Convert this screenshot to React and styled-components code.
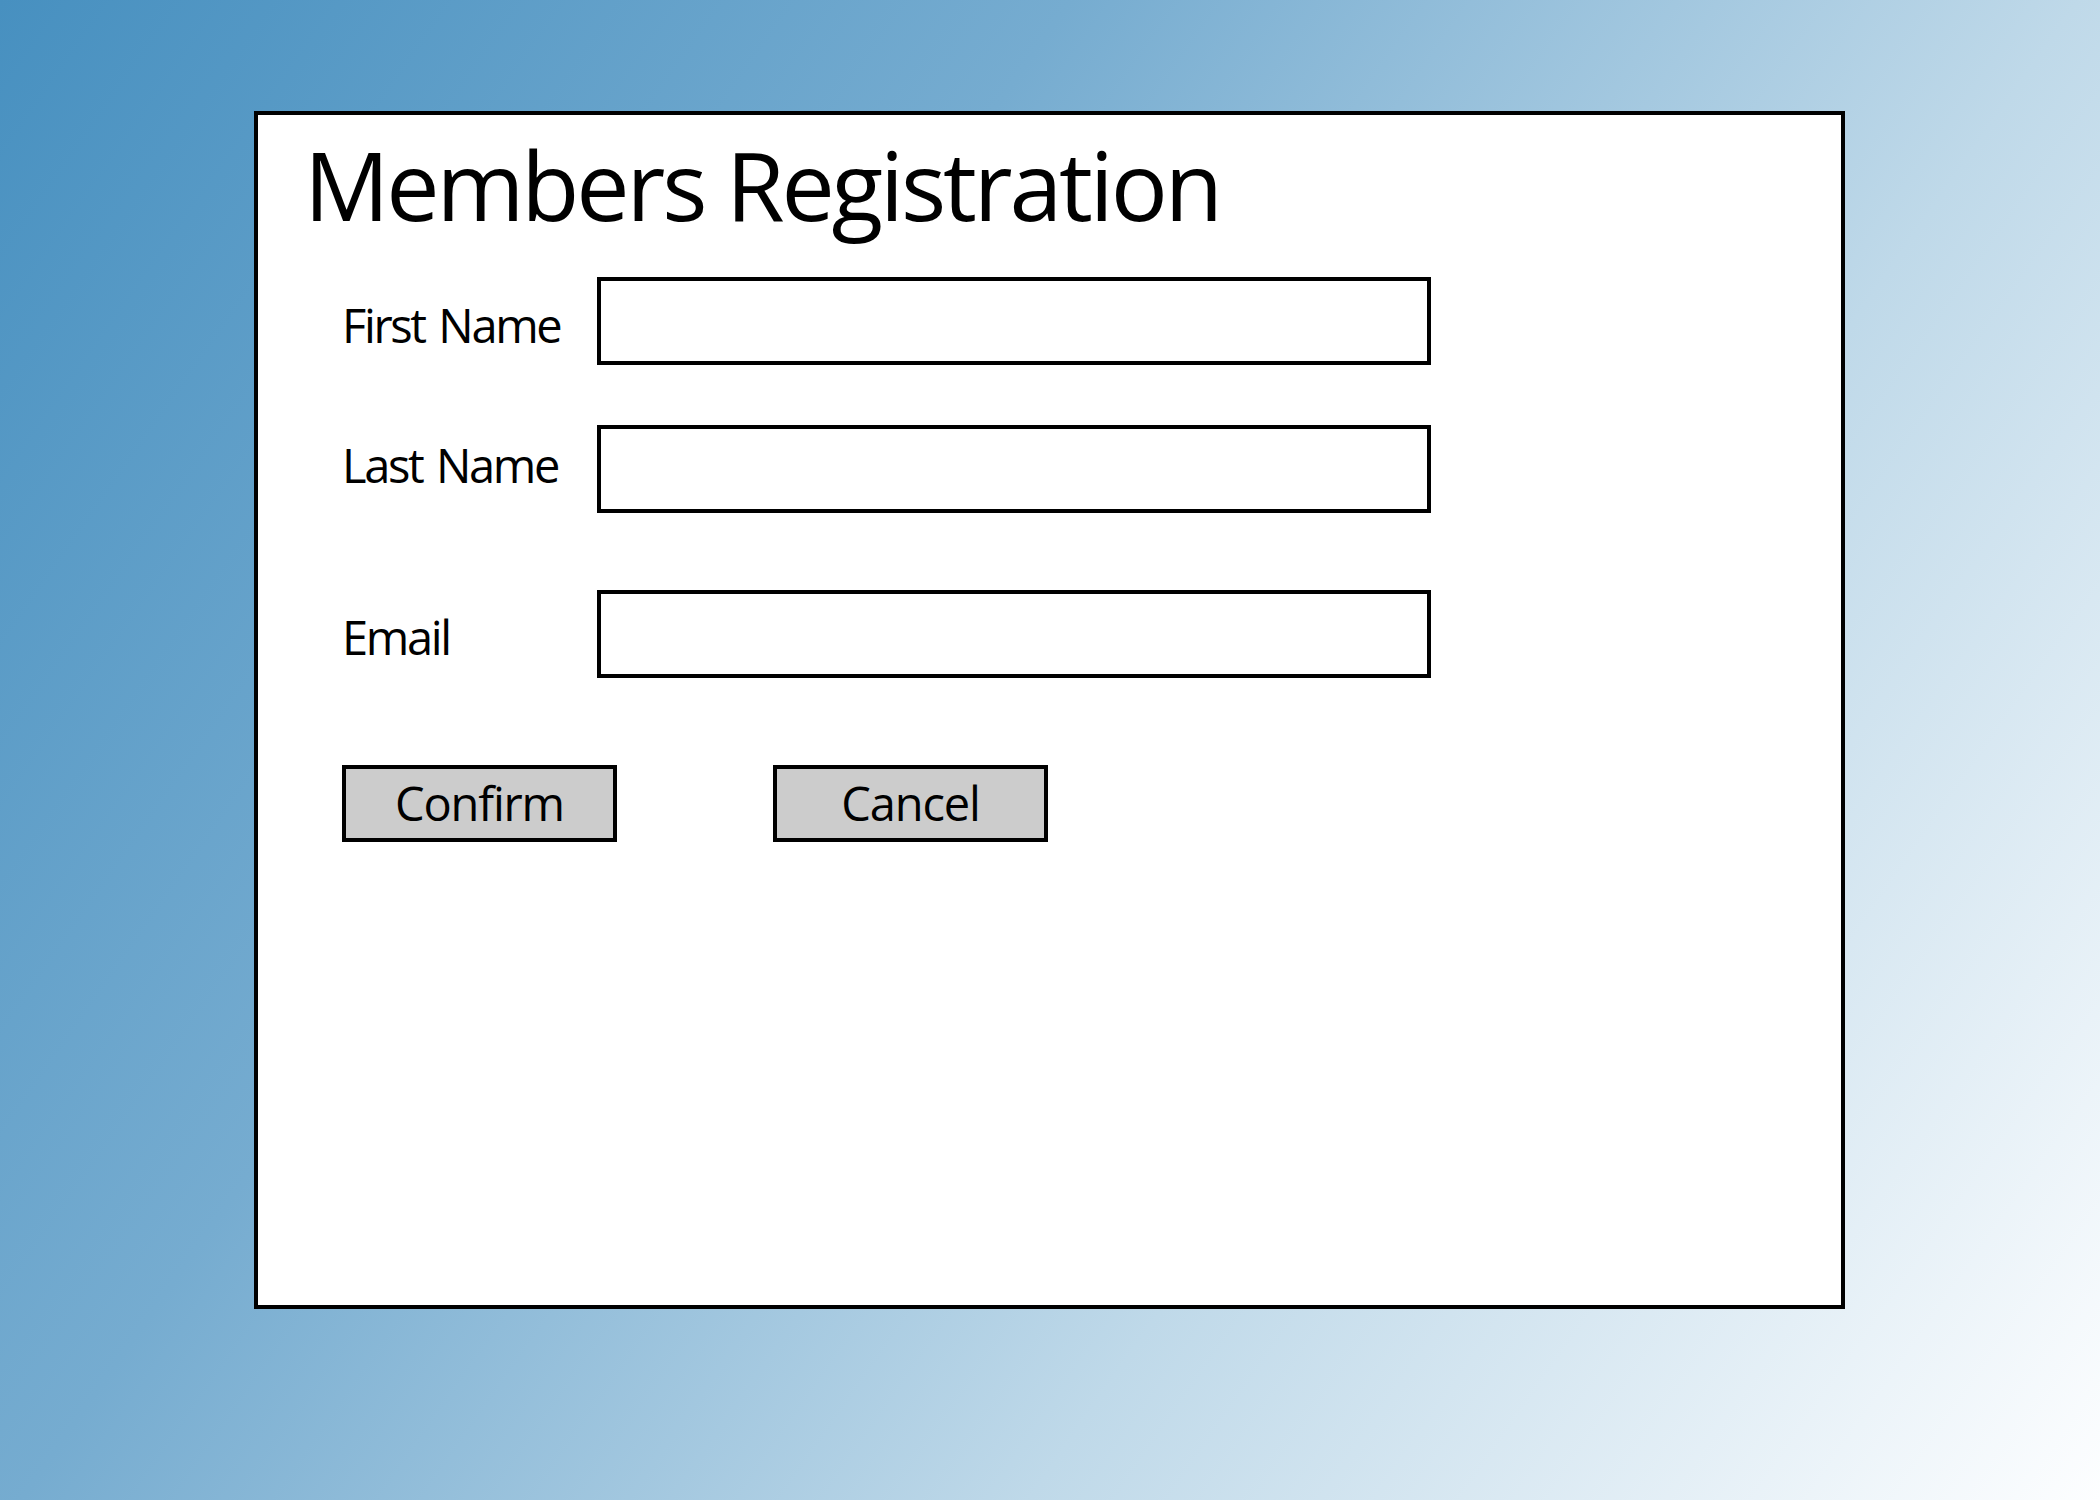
import React from 'react';
import styled, { createGlobalStyle } from 'styled-components';

const GlobalStyle = createGlobalStyle`
  html, body {
    margin: 0;
    padding: 0;
  }
  body {
    min-height: 1500px;
    background: linear-gradient(125deg, #4790c0 0%, #76acd0 34%, #bfd9e9 66%, #fdfeff 100%);
    font-family: "Open Sans", "Noto Sans", sans-serif;
  }
`;

const Page = styled.div`
  width: 2100px;
  height: 1500px;
  box-sizing: border-box;
  padding: 111px 0 0 254px;
`;

const Panel = styled.div`
  width: 1591px;
  height: 1198px;
  box-sizing: border-box;
  border: 4px solid #000;
  background: #fff;
  padding: 22px 0 0 46px;
`;

const Title = styled.h1`
  margin: 0;
  font-size: 95px;
  font-weight: 400;
  letter-spacing: -0.033em;
  line-height: 95px;
  color: #000;
  white-space: nowrap;
`;

const Form = styled.form`
  display: flex;
  flex-direction: column;
  padding-left: 38px;
  margin-top: 45px;
`;

const Row = styled.div`
  display: flex;
  align-items: flex-start;
  height: 88px;
  margin-top: ${(p) => p.$gap || 0}px;
`;

const Label = styled.label`
  flex: none;
  width: 255px;
  white-space: nowrap;
  font-size: 47px;
  line-height: 47px;
  letter-spacing: -0.05em;
  word-spacing: 0.08em;
  color: #000;
  margin-top: ${(p) => p.$top}px;
`;

const Field = styled.input`
  width: 834px;
  height: 88px;
  box-sizing: border-box;
  border: 4px solid #000;
  background: #fff;
  margin: 0;
  padding: 0 12px;
  font-family: inherit;
  font-size: 40px;
  outline: none;
`;

const Buttons = styled.div`
  display: flex;
  gap: 156px;
  margin-top: 87px;
`;

const Button = styled.button`
  width: 275px;
  height: 77px;
  box-sizing: border-box;
  border: 4px solid #000;
  background: #cccccc;
  margin: 0;
  padding: 0;
  font-family: inherit;
  font-size: 47px;
  line-height: 47px;
  letter-spacing: -0.025em;
  color: #000;
`;

export default function App() {
  return (
    <>
      <GlobalStyle />
      <Page>
        <Panel>
          <Title>Members Registration</Title>
          <Form onSubmit={(e) => e.preventDefault()}>
            <Row>
              <Label htmlFor="first" $top={25}>First Name</Label>
              <Field id="first" type="text" />
            </Row>
            <Row $gap={60}>
              <Label htmlFor="last" $top={17}>Last Name</Label>
              <Field id="last" type="text" />
            </Row>
            <Row $gap={77}>
              <Label htmlFor="email" $top={24}>Email</Label>
              <Field id="email" type="email" />
            </Row>
            <Buttons>
              <Button type="submit">Confirm</Button>
              <Button type="button">Cancel</Button>
            </Buttons>
          </Form>
        </Panel>
      </Page>
    </>
  );
}
